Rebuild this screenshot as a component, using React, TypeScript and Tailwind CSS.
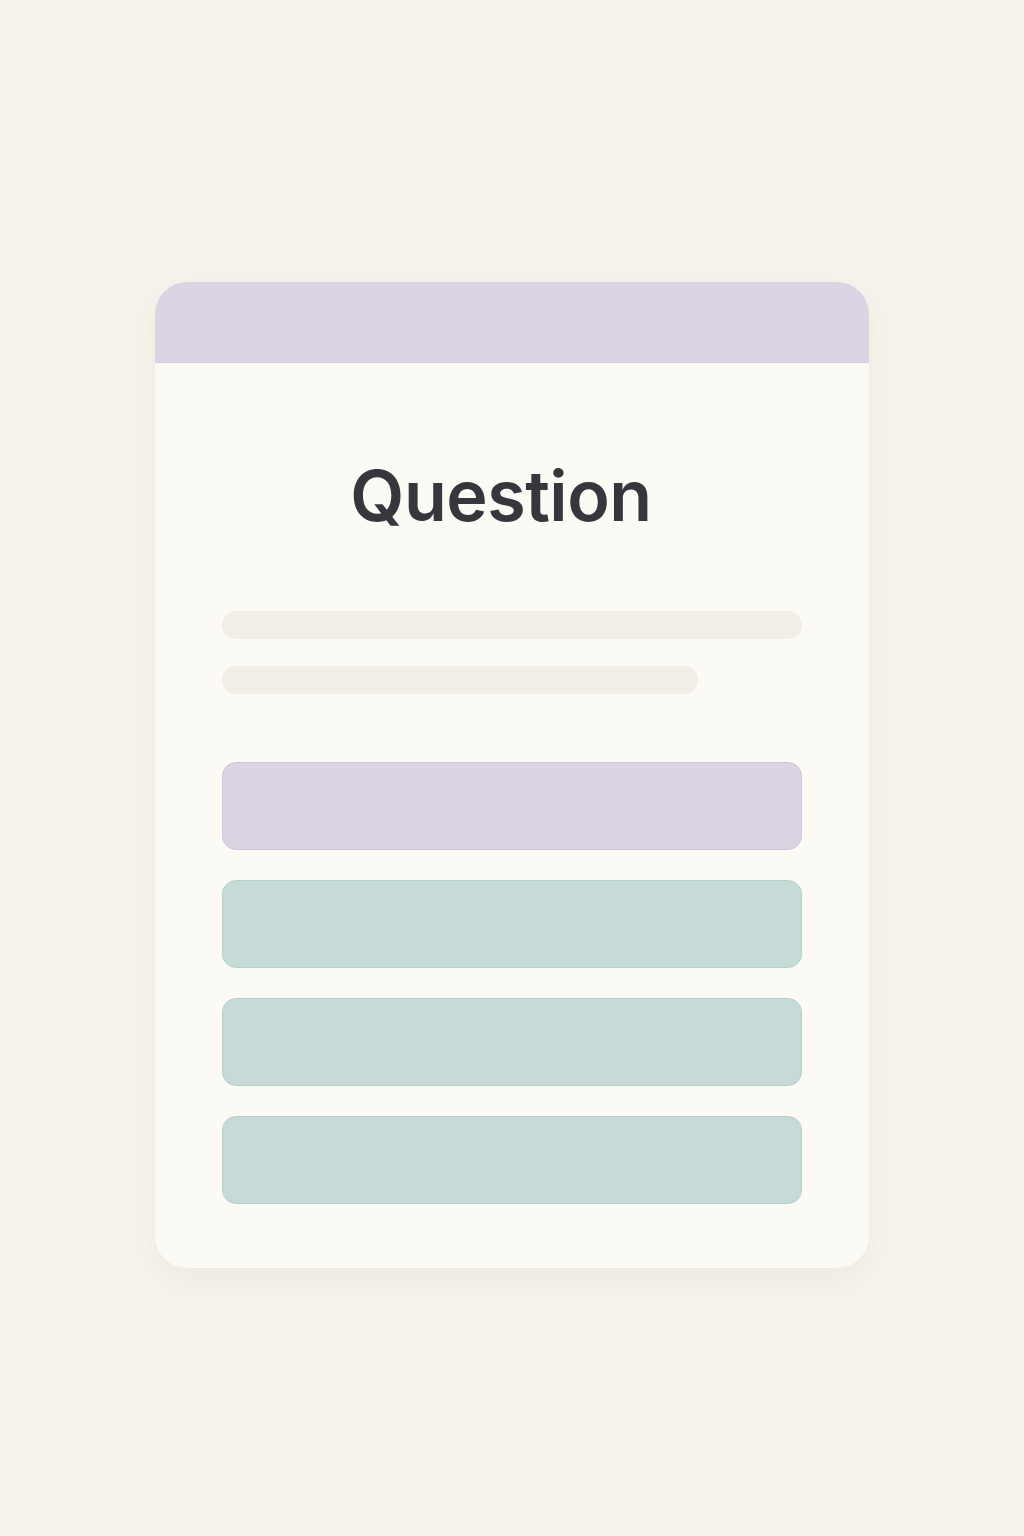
import { FunctionComponent } from "react";

const App: FunctionComponent = () => {
  const answers = [
    "bg-[#dcd3e3] border-[#cfc4dc]",
    "bg-[#c6dbd7] border-[#b6d0cb]",
    "bg-[#c6dbd7] border-[#b6d0cb]",
    "bg-[#c6dbd7] border-[#b6d0cb]",
  ];
  return (
    <div
      className="min-h-screen w-full bg-[#f7f3ec] flex justify-center pt-[282px]"
      style={{ fontFamily: "Inter, 'Noto Sans', sans-serif" }}
    >
      <div className="w-[714px] h-[986px] bg-[#fcfaf4] rounded-[32px] overflow-hidden shadow-[0_12px_32px_rgba(80,60,30,0.06)] flex flex-col">
        <div className="h-[81px] bg-[#dcd4e3] border-b border-[#d4cadf]" />
        <div className="px-[67px] flex flex-col">
          <h1 className="mt-[98px] text-center pr-[22px] text-[70px] leading-none font-semibold text-[#36363c] tracking-[-0.5px]">
            Question
          </h1>
          <div className="mt-[80px] flex flex-col gap-[27px]">
            <div className="h-[28px] w-full rounded-full bg-[#f2eee7]" />
            <div className="h-[28px] w-[476px] rounded-full bg-[#f2eee7]" />
          </div>
          <div className="mt-[68px] flex flex-col gap-[30px]">
            {answers.map((cls, i) => (
              <div key={i} className={`w-full h-[88px] rounded-[14px] border ${cls}`} />
            ))}
          </div>
        </div>
      </div>
    </div>
  );
};

export default App;
